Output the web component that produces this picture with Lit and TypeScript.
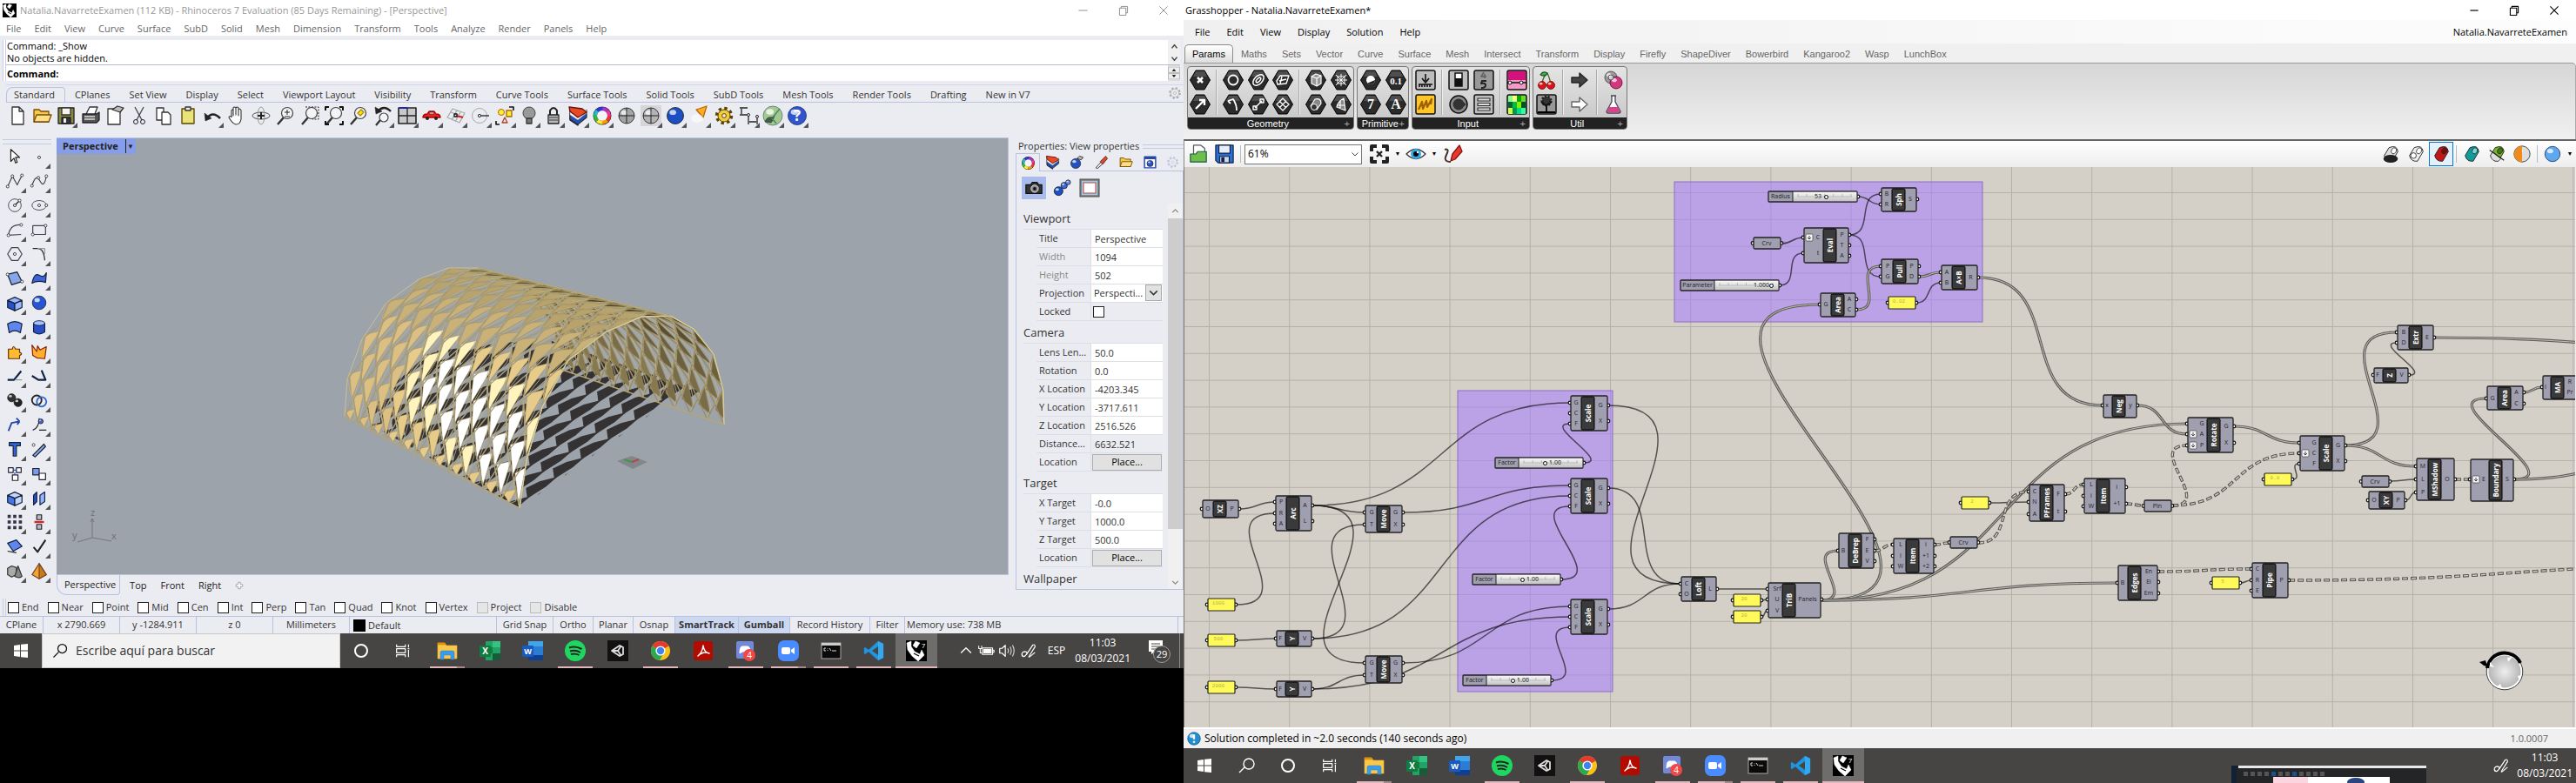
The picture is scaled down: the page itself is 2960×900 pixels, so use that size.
import { LitElement, html, svg, css, nothing } from 'lit';
import { customElement, property } from 'lit/decorators.js';
import { styleMap } from 'lit/directives/style-map.js';

/* ---------- shared ---------- */

const base = css`
  :host { display: block; font-family: 'Open Sans', 'Noto Sans', sans-serif; font-size: 11px; line-height: 16px; color: #222; }
  * { box-sizing: border-box; }
  button { font: inherit; color: inherit; background: none; border: 0; padding: 0; margin: 0; display: inline-flex; align-items: center; justify-content: center; white-space: nowrap; }
  input, select { font: inherit; color: inherit; margin: 0; border-radius: 0; }
  svg { display: block; }
`;

const ic = (body: unknown, size = 24) =>
  html`<svg width=${size} height=${size} viewBox="0 0 24 24" aria-hidden="true">${body}</svg>`;

const ball = (cx: number, cy: number, r: number, fill: string, line = '#111') => svg`
  <circle cx=${cx} cy=${cy} r=${r} fill=${fill} stroke=${line} stroke-width=".8"/>
  <ellipse cx=${cx - r * 0.3} cy=${cy - r * 0.4} rx=${r * 0.4} ry=${r * 0.3} fill="#fff" opacity=".75"/>`;

const path = (d: string, stroke = '#222', fill = 'none', w = 1.3) =>
  svg`<path d=${d} stroke=${stroke} fill=${fill} stroke-width=${w} stroke-linejoin="round"/>`;

const lens = (inner: unknown = nothing) => svg`
  ${path('M10 14L3 22', '#333', 'none', 2.4)}
  <circle cx="14" cy="9" r="6.5" fill="#f4f4f6" stroke="#444" stroke-width="1.2"/>${inner}`;

const wheel = (r = 8) => {
  const colors = ['#e33', '#f90', '#fe2', '#3b3', '#2bc', '#33d', '#a3c', '#e3a'];
  const c = 2 * Math.PI * r;
  return svg`<circle cx="12" cy="12" r=${r + 2.5} fill="#222"/>${colors.map((k, i) => svg`
    <circle cx="12" cy="12" r=${r} fill="none" stroke=${k} stroke-width="4" stroke-dasharray="${c / 8} ${c}" stroke-dashoffset=${-i * c / 8}/>`)}
    <circle cx="12" cy="12" r=${r - 2} fill="#f4f4f8"/>`;
};

const layers = svg`${path('M3 4V17L12 23V14Z', '#113', '#1d50b8')}${path('M3 8L12 14L22 6V14L12 22L3 16Z', '#333', '#1d50b8')}${path('M3 7L12 12L22 5V9L12 17L3 11Z', '#888', '#fff', 0.8)}${path('M2 2L17 4L22 8L12 14L3 7Z', '#611', '#ea4a22')}`;
const folder = svg`${path('M3 5H9L11 7H20V19H3Z', '#7a4c00', '#f7c948')}${path('M6 11H23L20 19H3Z', '#7a4c00', '#ffe08a')}`;
const gear = (c: string, f: string) => svg`
  <circle cx="12" cy="12" r="8.5" fill="none" stroke=${c} stroke-width="3.4" stroke-dasharray="3.4 3.28"/>
  <circle cx="12" cy="12" r="7" fill=${f} stroke=${c} stroke-width="1"/>
  <circle cx="12" cy="12" r="2.4" fill="#eee" stroke=${c}/>`;
const eye = svg`${path('M1 12Q12 1 23 12Q12 23 1 12Z', '#333', '#fff')}<circle cx="12" cy="12" r="6" fill="#36a9e0"/><circle cx="12" cy="12" r="3" fill="#001"/><circle cx="14" cy="10" r="1.2" fill="#fff"/>`;

/* ---------- taskbar ---------- */

const rhinoLogo = svg`<rect width="24" height="24" fill="#000"/>
  ${path('M1 3L6 1L6 7L10 13L16 16L18 11L21 17L14 24L7 18L2 11Z', '#fff', '#fff', 0.5)}${path('M8 6L11 1L16 3L12 9Z', '#fff', '#fff', 0.5)}${path('M9 15L15 18', '#000')}`;

const appIcons: Record<string, unknown> = {
  start: path('M4 6L11 5V11.5H4ZM12 4.8L20 4V11.5H12ZM4 12.5H11V19L4 18ZM12 12.5H20V20L12 19.2Z', '#fff', '#fff', 0),
  search: path('M4 20L10 14M9 10A6 6 0 1 0 21 10A6 6 0 1 0 9 10', '#fff', 'none', 1.4),
  cortana: svg`<circle cx="12" cy="12" r="7" fill="none" stroke="#fff" stroke-width="2"/>`,
  tasks: path('M4 4V7H15V4M4 20V17H15V20M4 9.5H15V14.5H4ZM19 4V8M19 11V20M18 9.5H20', '#fff', 'none', 1.3),
  explorer: svg`${path('M1 3H9L11 6H23V21H1Z', '#f5b92e', '#f9c74a', 0.6)}${path('M1 3H9L10 5H1Z', '#d98b00', '#e59400', 0.5)}${path('M4 22V14Q4 12 6 12H18Q20 12 20 14V22H16V17H8V22Z', '#2f86d0', '#3a9be8', 0.5)}`,
  excel: svg`<rect x="7" y="1" width="17" height="22" rx="1" fill="#21a366"/><path d="M15 1H24V8H15Z" fill="#33c481"/><path d="M15 15H24V23H15Z" fill="#185c37"/><path d="M7 8H15V15H7Z" fill="#107c41"/><rect y="6" width="13" height="13" rx="1" fill="#107c41"/><text x="6.5" y="16" font-size="10" font-weight="700" fill="#fff" text-anchor="middle">X</text>`,
  word: svg`<rect x="7" y="1" width="17" height="22" rx="1" fill="#2b7cd3"/><path d="M7 1H24V7H7Z" fill="#41a5ee"/><path d="M7 17H24V23H7Z" fill="#103f91"/><rect y="6" width="13" height="13" rx="1" fill="#185abd"/><text x="6.5" y="16" font-size="9" font-weight="700" fill="#fff" text-anchor="middle">W</text>`,
  spotify: svg`<circle cx="12" cy="12" r="12" fill="#1ed760"/>${path('M5 8.5Q12 6 19.5 10M6 12.5Q12 10.5 18 14M7 16Q12 14.5 16.5 17', '#222', 'none', 2)}`,
  unity: svg`<rect width="24" height="24" fill="#111"/>${path('M5 12L14 6L18 8V16L14 18ZM5 12H12M12 12L16 6M12 12L16 18', '#ddd', 'none', 1.8)}`,
  chrome: svg`<circle cx="12" cy="12" r="11" fill="#fbc116"/><path d="M12 12L2.5 6.5A11 11 0 0 1 21.5 6.5Z" fill="#e33b2e"/><path d="M12 12L2.5 6.5A11 11 0 0 0 11 23L16 14Z" fill="#2da94f"/><circle cx="12" cy="12" r="5.6" fill="#fff"/><circle cx="12" cy="12" r="4.2" fill="#3f83f0"/>`,
  acrobat: svg`<rect x="1" y="1" width="22" height="22" rx="3" fill="#b30b00"/>${path('M6 18Q11 14 12 6Q13 14 19 15Q12 12 6 18Z', '#fff', 'none', 1.5)}`,
  discord: svg`<rect x="1" y="1" width="20" height="20" rx="2" fill="#7289da"/>${path('M5 15Q5 7 8 7H14Q17 7 17 15L14 13H8Z', '#fff', '#fff', 1)}<circle cx="16" cy="17" r="7" fill="#f04747"/><text x="16" y="21" font-size="10" fill="#fff" text-anchor="middle">4</text>`,
  zoom: svg`<rect width="24" height="24" rx="7" fill="#4a8cff"/><rect x="4" y="8" width="10" height="8" rx="2" fill="#fff"/><path d="M15 11L19 8V16L15 13Z" fill="#fff"/>`,
  cmd: svg`<rect x="1" y="3" width="22" height="18" fill="#0a0a0a" stroke="#aaa"/><path d="M1 3H23V6H1Z" fill="#ccc"/>${path('M6 9H4V12H6M8 9.500V10M8 11V12M10 9L12 12M13 12H18', '#eee', 'none', 0.9)}`,
  code: svg`${path('M17 1L23 4V20L17 23L6 13L2 16L1 15V9L2 8L6 11Z', '#1b80c4', '#2196e0', 0.5)}<path d="M17 7V17L10 12Z" fill="#474543"/><path d="M17 1L23 4V20L17 23Z" fill="#35a8ee"/>`,
  rhino: svg`${rhinoLogo}<text x="20" y="9" font-size="8" fill="#fff" text-anchor="middle">7</text>`,
};
const pinned = ['explorer', 'excel', 'word', 'spotify', 'unity', 'chrome', 'acrobat', 'discord', 'zoom', 'cmd', 'code', 'rhino'];
const running = new Set(['explorer', 'spotify', 'chrome', 'discord', 'zoom', 'cmd', 'code', 'rhino']);
const stacked = new Set(['explorer', 'zoom']);

@customElement('task-bar')
class TaskBar extends LitElement {
  @property({ type: Boolean }) primary = false;
  static styles = [base, css`
    :host { background: #474543; color: #fff; height: 40px; flex: none; }
    .bar { display: flex; height: 100%; position: relative; }
    .sys { width: 48px; }
    .search { display: flex; align-items: center; gap: 8px; flex: 0 1 343px; background: #f2f2f2; border: 1px solid #c8c8c8; padding-left: 10px; }
    .search input { border: 0; background: none; font-size: 14px; color: #222; flex: 1; min-width: 0; padding: 0; outline: 0; }
    .search input::placeholder { color: #333; opacity: 1; }
    .apps { display: flex; margin-left: 3px; gap: 1px; }
    .app { width: 48px; border-bottom: 2px solid transparent; padding-top: 2px; background-clip: padding-box; position: relative; }
    .on::after { content: ''; position: absolute; left: 4px; right: 4px; bottom: -2px; height: 2px; background: #e0b6bb; }
    .stack::after { background: linear-gradient(90deg, #e0b6bb 78%, #a5888b 78%); }
    .active { background: #6f6d6c; background-clip: border-box; }
    .active::after { left: 0; right: 0; }
    .tray { margin-left: auto; display: flex; align-items: center; gap: 3px; }
    .lang { font-size: 12px; padding: 0 8px; }
    .clock { text-align: center; line-height: 18px; font-size: 12px; }
    .note { margin: 0 2px 0 8px; width: 40px; }
    .edge { border-left: 1px solid #888; width: 5px; height: 100%; }
    .gap { width: 1px; }
    .thumb { position: absolute; right: 172px; bottom: 0; width: 224px; height: 20px; }
  `];
  render() {
    const pen = ic(path('M4 19Q2 14 7 13Q12 13 8 18Q5 21 4 17M9 17L17 5Q20 3 20 7L13 18Q11 21 14 19L20 14', '#fff'), 22);
    return html`<div class="bar">
      <button class="sys" aria-label="Inicio">${ic(appIcons.start)}</button>
      ${this.primary
        ? html`<label class="search">${ic(path('M3 21L10 14M9 9A6 6 0 1 0 21 9A6 6 0 1 0 9 9', '#111', 'none', 1.5), 20)}<input placeholder="Escribe aquí para buscar" aria-label="Buscar"></label>`
        : html`<button class="sys" aria-label="Buscar">${ic(appIcons.search)}</button>`}
      <button class="sys" aria-label="Cortana">${ic(appIcons.cortana)}</button>
      <button class="sys" aria-label="Vista de tareas">${ic(appIcons.tasks, 22)}</button>
      <div class="apps">${pinned.map(a => html`
        <button aria-label=${a} class="app ${running.has(a) ? 'on' : ''} ${stacked.has(a) ? 'stack' : ''} ${a === 'rhino' ? 'active' : ''}">${ic(appIcons[a])}</button>`)}
      </div>
      ${this.primary ? nothing : html`
        <svg class="thumb" viewBox="0 0 224 20" aria-hidden="true">
          <rect width="224" height="20" fill="#242527"/><rect width="6" height="20" fill="#123"/><rect x="8" width="216" height="3" fill="#e8e8e8"/>
          ${[0, 1, 2, 3, 4, 5, 6, 7, 8, 9, 10, 11].map(i => svg`<rect x=${14 + i * 8} y="7" width="5" height="5" fill=${i === 4 || i === 7 ? '#1d4f8c' : '#555'}/>`)}
          <rect x="48" y="13" width="134" height="7" fill="#fff"/><rect x="48" y="13" width="40" height="7" fill="#fbd5e0"/><ellipse cx="143" cy="19" rx="10" ry="5" fill="#2b4580"/>
        </svg>`}
      <div class="tray">
        ${this.primary ? html`
          <button aria-label="Mostrar iconos">${ic(path('M5 15L12 8L19 15', '#fff', 'none', 1.6), 20)}</button>
          ${ic(svg`${path('M7 8H21V17H7ZM21 11H23V14H21', '#fff')}${path('M9 10H19V15H9Z', '#fff', '#fff')}${path('M2 5V9H6V5M4 9V15H7', '#fff')}`, 20)}
          ${ic(svg`${path('M3 9H6L10 5V19L6 15H3Z', '#fff')}${path('M13 9Q15 12 13 15M16 7Q19 12 16 17M19 5Q23 12 19 19', '#ccc')}`, 22)}` : nothing}
        ${pen}
        ${this.primary ? html`<span class="lang">ESP</span>` : html`<span class="gap"></span>`}
        <div class="clock"><div>11:03</div><div>08/03/2021</div></div>
        ${this.primary ? html`
          <svg class="note" width="40" height="28" viewBox="0 0 40 28" aria-hidden="true">
            <path d="M10 2H26V15H17L13 18V15H10Z" fill="#fff"/><path d="M13 6H23M13 9H23M13 12H23" stroke="#474543"/>
            <circle cx="25" cy="18" r="9.500" fill="#474543" stroke="#999"/><text x="25" y="22" font-size="11" fill="#fff" text-anchor="middle">29</text>
          </svg><span class="edge"></span>` : html`<span class="gap"></span>`}
      </div>
    </div>`;
  }
}

/* ---------- Rhino ---------- */

const R = {
  page: path('M6 2H14L19 7V22H6ZM14 2V7H19', '#333', '#fff'),
  folder,
  save: svg`${path('M3 3H21V21H3Z', '#222', '#8a8840')}${path('M7 3H17V11H7Z', '#333', '#f5f5ee')}${path('M7 14H17V21H7Z', '#222', '#333')}<path d="M9 15H12V20H9Z" fill="#eee"/>`,
  print: svg`${path('M7 10L11 2H20L17 10', '#333', '#fff')}${path('M3 10H19L22 8V17L19 20H3Z', '#222', '#555')}${path('M5 13H17M5 16H17', '#ddd')}`,
  notes: svg`${path('M4 4H18V22H4Z', '#333', '#fff')}${path('M9 5L15 1L22 3L18 8Z', '#333', '#bbb')}`,
  cut: svg`${path('M7 2L15 17M17 2L9 17', '#444')}<circle cx="8" cy="19" r="2.500" fill="none" stroke="#223"/><circle cx="16" cy="19" r="2.500" fill="none" stroke="#223"/>`,
  copy: svg`${path('M4 3H12V17H4Z', '#333', '#fff')}${path('M10 8H17L20 11V22H10Z', '#333', '#fff')}`,
  paste: svg`${path('M5 4H19V21H5Z', '#554400', '#ece27a')}${path('M9 2H15V6H9Z', '#333', '#eee')}`,
  undo: svg`${path('M6 15Q12 6 21 15', '#222', 'none', 2.6)}${path('M3 9L4 18L11 15Z', '#222', '#222', 0.5)}`,
  hand: path('M6 14V6Q7 4 8 6V12V3Q9 1 11 3V11V3Q12 1 14 3V12V5Q16 3 17 6V16Q16 22 11 22Q7 21 3 14Q4 11 6 14', '#333', '#fff', 1.1),
  rotate: svg`<ellipse cx="12" cy="12" rx="10" ry="4" fill="none" stroke="#555"/><ellipse cx="12" cy="12" rx="4" ry="10" fill="none" stroke="#999"/>${path('M8 12H16M12 8V16', '#222', 'none', 2)}`,
  zoomDyn: lens(path('M11 8H17M14 5V11M11 13H17', '#222', 'none', 1)),
  zoomWin: svg`${lens()}<path d="M7 2H22V16H15" fill="none" stroke="#222" stroke-dasharray="2 1.5"/>`,
  zoomExt: svg`${lens()}${path('M2 6V2H6M18 2H22V6M22 18V22H18M6 22H2V18', '#111', 'none', 2)}`,
  zoomSel: lens(svg`${path('M11 9L15 5L18 8L14 12Z', '#a80', '#ffe400')}`),
  zoomPrev: svg`${path('M9 17L4 23', '#333', 'none', 2.2)}<circle cx="13" cy="14" r="5" fill="#f4f4f6" stroke="#444" stroke-width="1.2"/>${path('M6 7Q13 -1 21 7', '#222', 'none', 2.4)}${path('M3 2L4 10L11 7Z', '#222', '#222', 0.5)}`,
  views: svg`${path('M2 3H22V21H2Z', '#222', '#c9c9c9', 1.6)}${path('M12 3V21M2 12H22', '#222')}${path('M3 3H12', '#22a', 'none', 2)}`,
  car: svg`${path('M2 13Q3 10 7 10L9 7H15L17 10Q22 10 22 14H2Z', '#a00', '#e22')}${path('M10 8H14L15 10H9Z', '#611', '#cde', 0.6)}<circle cx="7" cy="15" r="2" fill="#222"/><circle cx="17" cy="15" r="2" fill="#222"/>`,
  cplane: svg`${path('M8 4L22 9L16 20L2 14ZM6 8L20 13M13 6L7 17M17 8L11 19', '#aaa')}${path('M12 12L20 14', '#d22', 'none', 2)}${path('M10 10H13V13H10Z', '#111', '#fff')}`,
  circle: svg`<circle cx="11" cy="12" r="8.500" fill="none" stroke="#aaa"/><circle cx="11" cy="12" r="1.600" fill="#fff" stroke="#222"/>${path('M13 12H22', '#222')}`,
  shapes: svg`<circle cx="8" cy="8" r="3.500" fill="#fe3" stroke="#a60"/>${path('M14 6H20V13H14Z', '#a60', '#fe3')}${path('M9 20L12 14L15 20Z', '#a42')}${path('M17 2H22V6M2 18V22H6', '#111', 'none', 1.6)}`,
  bulb: svg`<circle cx="12" cy="9" r="7" fill="#999" stroke="#444"/>${path('M9 15H15V21H9Z', '#333', '#777')}`,
  lock: svg`${path('M8 11V6Q12 0 16 6V11', '#222', 'none', 2)}${path('M6 11H18V21H6Z', '#222', '#bbb')}${path('M6 14H18M6 17H18', '#666')}`,
  layers,
  wheel: wheel(),
  wire: svg`${ball(12, 12, 9, '#a4a4a6')}${path('M3 12H21M12 3V21', '#222', 'none', 1)}`,
  wireSel: svg`<rect width="24" height="24" fill="#d6d6da"/>${ball(12, 12, 9, '#b4b4b6')}${path('M3 12H21M12 3V21', '#222', 'none', 1)}`,
  render: ball(12, 12, 9.5, '#1d4fc4'),
  spot: svg`${path('M8 5L20 1L16 14Z', '#b60', '#ffac28')}<ellipse cx="9" cy="15" rx="7" ry="5" fill="#fff" opacity=".6"/>`,
  gear: gear('#5a4400', '#f4c93c'),
  dims: svg`${path('M2 3H8M2 11H12V22M22 11V22M4 4V10M13 19H21M11 3H8', '#222')}<circle cx="12" cy="11" r="1.500" fill="#fff" stroke="#222"/><circle cx="22" cy="13" r="1.500" fill="#fff" stroke="#222"/>`,
  hopper: svg`${ball(12, 12, 11, '#a4c890', '#577')}${path('M3 19Q5 13 11 14L14 12L12 17L10 20Z', '#354', '#465b45', 1)}${path('M12 14L20 4M11 15L16 21', '#486', 'none', 1.4)}`,
  help: svg`${ball(12, 12, 10.5, '#3355cc', '#137')}<text x="12" y="18" font-size="17" font-weight="700" fill="#fff" text-anchor="middle">?</text>`,
};

const node = (x: number, y: number) => svg`<circle cx=${x} cy=${y} r="1.700" fill="#fff" stroke="#222" stroke-width=".9"/>`;
const box3 = (c: string, d: string) => svg`${path('M3 9L12 5L21 9L12 13Z', '#123', c)}${path('M3 9V18L12 22V13Z', '#123', d)}${path('M21 9V18L12 22V13Z', '#123', c)}`;
const palette: unknown[] = [
  path('M7 3V18L11 14L13 20L15 19L13 13H18Z', '#222', '#fff'), node(12, 13),
  svg`${path('M3 19L9 6L15 17L21 5', '#445')}${node(3, 19)}${node(9, 6)}${node(21, 5)}`, svg`${path('M3 18Q8 2 13 12T21 6', '#445')}${node(3, 18)}${node(11, 8)}${node(21, 6)}`,
  svg`<circle cx="12" cy="12" r="8" fill="none" stroke="#445"/>${path('M12 12L18 6', '#222')}${node(12, 12)}${node(18, 6)}`, svg`<ellipse cx="12" cy="12" rx="9" ry="6" fill="none" stroke="#445"/>${node(12, 12)}${node(21, 12)}`,
  svg`${path('M4 19Q6 5 20 6M4 19L20 18', '#445')}${node(4, 19)}${node(20, 6)}`, svg`${path('M4 7H20V18H4Z', '#445')}${node(4, 18)}${node(20, 7)}`,
  svg`${path('M8 4H16L21 12L16 20H8L3 12Z', '#445')}${node(12, 12)}`, svg`${path('M4 5H10Q18 5 19 20', '#222')}${path('M10 5H19V12', '#999')}`,
  svg`${path('M3 7L15 4L21 16L8 20Z', '#123', '#8aa4e8')}${node(3, 7)}${node(21, 16)}`, svg`${path('M3 18Q6 4 12 8T21 5L20 17Q10 14 3 18Z', '#124', '#3c64d8')}`,
  box3('#9ab4ff', '#2a50c8'), ball(12, 12, 8.5, '#2656d4'),
  svg`${path('M3 8Q12 2 21 8L19 19Q12 14 5 19Z', '#124', '#5f86ec')}`, svg`${path('M5 7V18Q12 23 19 18V7Z', '#124', '#2a50c8')}<ellipse cx="12" cy="7" rx="7" ry="3" fill="#a9c0ff" stroke="#124"/>`,
  svg`${path('M4 9H9Q10 3 13 9H18V13Q23 15 18 17V21H4Z', '#630', '#fb3')}`, path('M3 4L9 12L10 5L13 10L21 6L19 21L9 20L4 17Z', '#820', '#ffae2f'),
  svg`${path('M3 17H11L20 6', '#124', 'none', 2.4)}${path('M12 17H21', '#999')}`, svg`${path('M3 12L11 17H20L15 5', '#124', 'none', 2.4)}`,
  svg`${ball(8, 9, 5, '#333')}${ball(16, 15, 5, '#222')}`, svg`<circle cx="9" cy="12" r="6" fill="none" stroke="#222" stroke-width="2"/><circle cx="15" cy="14" r="6" fill="none" stroke="#36c" stroke-width="2"/>`,
  svg`${path('M4 20L8 10L18 8M18 8L14 4M18 8L15 12', '#24a', 'none', 2)}`, svg`${path('M4 19Q12 16 12 4M12 19H21', '#222')}${ball(14, 8, 3, '#46c')}`,
  path('M5 4H19V8H14V21H10V8H5Z', '#123', '#3564d8'), svg`${path('M4 20L18 6L20 9L7 22Z', '#123', '#8fa8e8')}${node(5, 7)}`,
  svg`${path('M4 5H10V11H4ZM14 5H20V11H14ZM9 14H16V21H9Z', '#223', '#fff')}${path('M10 8H14M12 11V14', '#25c')}`, svg`${path('M4 6H12V14H4Z', '#223', '#7a9af0')}${path('M12 12H20V20H12Z', '#223', '#fff')}`,
  box3('#c5d4ff', '#4a74e6'), svg`${path('M5 21V9L9 5V17Z', '#124', '#2a50c8')}${path('M13 21V9L19 5V17Z', '#124', '#9ab4ff')}`,
  svg`${[5, 12, 19].map(x => [5, 12, 19].map(y => svg`<rect x=${x - 2} y=${y - 2} width="4" height="4" fill="#334" />`))}`, svg`${path('M9 3H15V9H9ZM9 15H15V21H9Z', '#223', '#bbb')}${path('M6 12H18', '#d22', 'none', 2.6)}`,
  svg`${path('M3 8L14 4L21 12L10 18Z', '#124', '#5f86ec')}${path('M3 18L14 20', '#222')}`, path('M5 13L10 19L20 4', '#222', 'none', 2.2),
  svg`${path('M3 9L8 6L14 8V17L8 20L3 17Z', '#333', '#aaa')}${path('M16 6L21 19Q17 22 12 19Z', '#333', '#888')}`, svg`${path('M12 3L21 17L12 22L3 17Z', '#743', '#f2a62a')}${path('M12 3V22L21 17Z', '#743', '#c77c10')}`,
];

type Pt = [number, number];
const mix = (a: Pt, b: Pt, t: number): Pt => [a[0] + (b[0] - a[0]) * t, a[1] + (b[1] - a[1]) * t];
const along = (list: Pt[], t: number): Pt => {
  const n = Math.min(Math.max(t, 0), list.length - 1 - 1e-6);
  return mix(list[Math.floor(n)], list[Math.floor(n) + 1], n % 1);
};
/* End arches of the vault in viewport pixels, far end first. */
const farArch: Pt[] = [[331, 320], [334, 277], [351, 231], [378, 190], [416, 162], [450, 149], [485, 149], [525, 165], [555, 195], [573, 232], [578, 265]];
const nearArch: Pt[] = [[532, 425], [540, 370], [558, 309], [588, 255], [632, 222], [672, 205], [705, 204], [732, 219], [755, 248], [766, 289], [767, 329]];
const COLS = 11;
const at = (i: number, j: number): Pt => {
  const t = Math.min(i, COLS) / COLS;
  return mix(along(farArch, j), along(nearArch, j), t * (0.84 + 0.16 * t));
};
const pts = (...p: Pt[]) => p.map(q => `${q[0].toFixed(1)},${q[1].toFixed(1)}`).join(' ');

const panelColor = (i: number, j: number) => {
  if (j >= 5.5) return ['#4b4229', '#5a4f32', '#6b6040', '#796c48', '#867950'][Math.min(4, Math.floor((j - 5.5) * 0.9) + (i < 7 ? 1 : 0))];
  const glare = Math.abs(j - (1.7 - (i - 5) * 0.17));
  if (i > 4.4 && j > 0 && glare < 0.65) return '#ffffff';
  if (i > 3.4 && j > 0 && glare < 1) return '#fff4bd';
  if (j < 3) return i < 3 ? '#dcc083' : '#e6cb8b';
  return j < 4 ? '#c9b178' : '#b8a36c';
};

const vault = () => {
  const half: unknown[] = [], front: unknown[] = [], shade: unknown[] = [];
  const g = (u: number, v: number): Pt => [532 - u * 25.5 + v * 18.2, 425 - u * 13 - v * 13.1];
  for (let u = -0.4; u < 13; u += 0.55)
    for (let v = -1; v < 12; v += 1.7)
      shade.push(svg`<polygon points=${pts(g(u, v), g(u + 0.42, v + 0.5), g(u + 0.3, v + 1.2), g(u, v + 1.9), g(u - 0.06, v + 1.1))}/>`);
  for (let r = 19; r >= 0; r--) {
    const j = r / 2, off = r % 2 ? 0.5 : 0;
    const inner = j >= 5.5;
    const out = inner ? half : front;
    for (let i = 0; i < COLS - off; i++) {
      const x = i + off;
      const l = at(x, j), rt = at(x + 1, j), top = at(x + 0.5, Math.min(j + 0.5, 10)), bot = at(x + 0.5, Math.max(j - 0.5, 0));
      out.push(svg`
        <polygon points=${pts(at(x + 0.02, j + 0.14), at(x + 0.72, Math.min(j + 0.34, 10)), at(x + 0.42, Math.max(j - 0.44, 0)))} fill=${panelColor(x, j)} stroke="#a68d56" stroke-width=".5"/>
        <polygon points=${pts(l, top, rt, bot)} fill="none" stroke=${inner ? '#9b8b5c' : '#a79b74'} stroke-width="1.200"/>
        <polyline points=${pts(l, bot, at(x + 0.76, j + 0.1), top)} fill="none" stroke="#bdb48a" stroke-width=".8"/>`);
    }
  }
  return svg`
    <clipPath id="floor"><polygon points="345,320 532,425 720,290 768,330 769,300 560,230 430,245"/></clipPath>
    <g fill="#353233" clip-path="url(#floor)">${shade}</g>${half}${front}
    <polyline points=${pts(...farArch.slice(0, 7))} fill="none" stroke="#c9c095"/>
    <polyline points=${pts(...nearArch)} fill="none" stroke="#d5cc9f" stroke-width="1.400"/>
    <path d="M331 320L532 425M485 149L705 204M578 265L767 329" stroke="#b5a678" stroke-width="1.400"/>
    <polygon points="644,371 661,365 679,372 662,380" fill="#83878c"/>
    <path d="M652 369L661 372" stroke="#3a9a4a" stroke-width="2"/><path d="M661 372L669 369" stroke="#b04a4a" stroke-width="2"/>`;
};

const field = (label: string, value: string, kind = 'text') => ({ label, value, kind });
const sections = [
  { title: 'Viewport', rows: [field('Title', 'Perspective'), field('Width', '1094', 'dim'), field('Height', '502', 'dim'), field('Projection', 'Perspecti...', 'select'), field('Locked', '', 'check')] },
  { title: 'Camera', rows: [field('Lens Len...', '50.0'), field('Rotation', '0.0'), field('X Location', '-4203.345'), field('Y Location', '-3717.611'), field('Z Location', '2516.526'), field('Distance...', '6632.521', 'read'), field('Location', 'Place...', 'button')] },
  { title: 'Target', rows: [field('X Target', '-0.0'), field('Y Target', '1000.0'), field('Z Target', '500.0'), field('Location', 'Place...', 'button')] },
];

@customElement('rhino-window')
class RhinoWindow extends LitElement {
  static styles = [base, css`
    :host { background: #ebecf1; min-width: 0; overflow: hidden; }
    .title { display: flex; align-items: center; height: 24px; background: #fff; color: #999; padding-left: 3px; gap: 4px; }
    .win { margin-left: auto; display: flex; }
    .win button { width: 46px; height: 24px; }
    .menu { display: flex; gap: 15px; height: 17px; background: #fff; padding-left: 7px; color: #666; }
    .command { margin: 5px 4px 4px 3px; border-left: 4px double #c9cfe2; display: grid; grid-template: 29px 18px / 1fr 14px; background: #fff; color: #000; line-height: 15px; }
    .log { padding-left: 1px; border-bottom: 1px solid #b4bdd4; overflow: hidden; white-space: pre-line; line-height: 14px; }
    .log-scroll { background: #f0f0f0; border-bottom: 1px solid #b4bdd4; display: flex; flex-direction: column; justify-content: space-around; align-items: center; }
    .prompt { display: flex; align-items: center; font-weight: 700; padding-left: 1px; }
    .prompt input { border: 0; flex: 1; outline: 0; min-width: 0; height: 15px; padding: 0 4px; }
    .spin { display: grid; background: #ddd; justify-content: center; align-content: center; }
    .tabs { display: flex; align-items: flex-end; height: 21px; margin-left: 7px; border-top: 1px solid #d3d7e8; border-bottom: 1px solid #b9c3e0; }
    .tabs button { height: 16px; padding: 0 11px; color: #333; }
    .tabs .sel { border: 1px solid #b9c3e0; border-bottom: 0; border-radius: 8px 4px 0 0; height: 17px; padding: 0 11px 0 8px; }
    .cog { margin-left: auto; padding: 0 2px 2px 0; }
    .icons { display: flex; height: 40px; padding: 1px 0 0 6px; }
    .tool { width: 28px; height: 28px; position: relative; }
    .tool::after { content: ''; position: absolute; right: 1px; bottom: 0; border: 3px solid; border-color: transparent #555 #555 transparent; }
    .plain::after { display: none; }
    .work { display: grid; grid-template-columns: 65px 1fr 201px; }
    .palette { display: grid; grid-template-columns: 28px 28px; align-content: start; margin-left: 3px; padding-top: 2px; }
    .palette::before { content: ''; grid-column: 1 / -1; height: 4px; border: solid #c3cbe2; border-width: 1px 0; }
    .view { background: #9da3aa; border: 1px solid #bcc4dc; border-width: 1px 1px 1px 0; position: relative; overflow: hidden; }
    .view > svg { width: 100%; height: 501px; }
    .name { position: absolute; left: 0; top: 0; background: #869dea; font-weight: 700; height: 18px; width: 91px; display: flex; align-items: center; justify-content: space-between; padding: 0 2px 0 7px; color: #222; }
    .name span { border-left: 1px solid #222; padding-left: 1px; font-size: 8px; }
    .views { display: flex; gap: 16px; height: 27px; padding-top: 3px; }
    .views button { height: 18px; }
    .views .sel { border: 1px solid #b9c3e0; border-top: 0; height: 23px; margin-top: -3px; padding: 0 4px 0 8px; border-radius: 0 0 4px 12px; margin-right: -5px; }
    .props { padding: 1px 0 0 8px; }
    .caption { display: flex; align-items: center; gap: 4px; padding: 1px 0 0 3px; color: #333; height: 17px; }
    .caption::after { content: ''; flex: 1; height: 3px; border: solid #c3cbe2; border-width: 1px 0; }
    .ptabs { display: flex; height: 21px; }
    .ptabs button { width: 28px; border-bottom: 1px solid #b9c3e0; }
    .ptabs button:first-child { border: 1px solid #b9c3e0; border-bottom: 0; }
    .ptabs button:last-child { flex: 1; }
    .panel { border: 1px solid #b9c3e0; border-top: 0; height: 481px; display: grid; grid-template-columns: 1fr 17px; overflow: hidden; }
    .pages { display: flex; gap: 4px; padding: 6px 0 0 6px; height: 37px; grid-column: 1 / -1; }
    .pages button { width: 28px; height: 26px; }
    .pages .sel { background: #aabbee; }
    .form { padding: 4px 6px 0 8px; }
    h3 { font-size: 13px; font-weight: 400; margin: 0; height: 26px; line-height: 26px; border-bottom: 1px solid #dcdfe8; color: #333; }
    .row { display: grid; grid-template-columns: 63px 1fr; margin-left: 15px; height: 21px; border-bottom: 1px solid #dcdfe8; align-items: center; color: #333; }
    .row label { padding-left: 3px; white-space: nowrap; border-right: 1px solid #dcdfe8; line-height: 20px; }
    .row.dim label { color: #888; }
    .row input[type='text'] { width: 100%; height: 20px; border: 0; background: #fff; padding: 0 4px; min-width: 0; }
    .row.read input[type='text'] { background: none; }
    .row select { appearance: none; border: 0; width: 100%; height: 20px; padding: 0 3px; background: #fff; }
    .pick { position: relative; }
    .pick svg { position: absolute; right: 1px; top: 0; border: 1px solid #aaa; background: #e1e1e1; pointer-events: none; }
    .row button { border: 1px solid #adadad; background: #e1e1e1; height: 19px; margin: 0 1px; color: #000; }
    input[type='checkbox'] { appearance: none; width: 13px; height: 13px; border: 1px solid #222; background: #fff; }
    .row input[type='checkbox'] { margin-left: 2px; }
    .scroll { background: #f0f0f0; display: flex; flex-direction: column; align-items: center; }
    .thumb { width: 100%; flex: 0 1 357px; background: #cdcdcd; }
    .scroll svg { padding: 2px; }
    .scroll svg:last-child { margin-top: auto; }
    .osnap { display: flex; align-items: center; gap: 10px; height: 20px; margin-left: 3px; border-left: 4px double #c9cfe2; padding-left: 2px; color: #333; }
    .osnap label { display: flex; align-items: center; gap: 3px; }
    .osnap input:disabled { border-color: #bbb; background: #e6e6e6; }
    .status { display: flex; height: 20px; border-top: 1px solid #b9c3e0; color: #333; line-height: 18px; }
    .status > * { border-right: 1px solid #b9c3e0; text-align: center; flex: none; }
    .c50 { width: 50px; } .c88 { width: 88px; } .c169 { width: 169px; } .c65 { width: 65px; } .c46 { width: 46px; } .c48 { width: 48px; } .c73 { width: 73px; } .c59 { width: 59px; } .c92 { width: 92px; } .c40 { width: 40px; }
    .layer { display: flex; align-items: center; gap: 3px; padding-left: 4px; justify-content: flex-start; }
    .layer::before { content: ''; width: 14px; height: 14px; background: #000; }
    .on { background: #ccd7f0; font-weight: 700; }
    .status .mem { flex: 1; text-align: left; padding-left: 2px; margin-right: 6px; }
  `];
  render() {
    const menus = ['File', 'Edit', 'View', 'Curve', 'Surface', 'SubD', 'Solid', 'Mesh', 'Dimension', 'Transform', 'Tools', 'Analyze', 'Render', 'Panels', 'Help'];
    const tabs = ['Standard', 'CPlanes', 'Set View', 'Display', 'Select', 'Viewport Layout', 'Visibility', 'Transform', 'Curve Tools', 'Surface Tools', 'Solid Tools', 'SubD Tools', 'Mesh Tools', 'Render Tools', 'Drafting', 'New in V7'];
    const flyouts = new Set(['save', 'undo', 'zoomPrev', 'views', 'car', 'cplane', 'circle', 'shapes', 'bulb', 'lock', 'layers', 'wheel', 'wireSel', 'render', 'spot', 'gear', 'dims', 'hopper', 'help']);
    const snaps = ['End', 'Near', 'Point', 'Mid', 'Cen', 'Int', 'Perp', 'Tan', 'Quad', 'Knot', 'Vertex', 'Project', 'Disable'];
    const status: [string, string][] = [['CPlane', 'c50'], ['x 2790.669', 'c88'], ['y -1284.911', 'c88'], ['z 0', 'c88'], ['Millimeters', 'c88'], ['Default', 'c169 layer'], ['Grid Snap', 'c65'], ['Ortho', 'c46'], ['Planar', 'c46'], ['Osnap', 'c48'], ['SmartTrack', 'c73 on'], ['Gumball', 'c59 on'], ['Record History', 'c92'], ['Filter', 'c40'], ['Memory use: 738 MB', 'mem']];
    return html`
      <header class="title">${ic(rhinoLogo, 16)}<span>Natalia.NavarreteExamen (112 KB) - Rhinoceros 7 Evaluation (85 Days Remaining) - [Perspective]</span>
        <div class="win">
          <button aria-label="Minimize">${ic(path('M6 12H17', '#888', 'none', 1), 22)}</button>
          <button aria-label="Restore">${ic(path('M7 9H15V18H7ZM9 9V7H17V15H15', '#888', 'none', 1), 22)}</button>
          <button aria-label="Close">${ic(path('M7 7L17 17M17 7L7 17', '#888', 'none', 1), 22)}</button>
        </div>
      </header>
      <nav class="menu">${menus.map(m => html`<button>${m}</button>`)}</nav>
      <section class="command">
        <div class="log">Command: _Show
No objects are hidden.</div>
        <div class="log-scroll">${ic(path('M4 17L12 7L20 17', '#444', 'none', 4), 9)}${ic(path('M4 7L12 17L20 7', '#444', 'none', 4), 9)}</div>
        <label class="prompt">Command:<input type="text"></label>
        <div class="spin">${ic(svg`<path d="M1 0H23V11H1ZM1 13H23V24H1Z" fill="#eee" stroke="#999"/><path d="M8 8L12 4L16 8ZM8 16L12 20L16 16Z"/>`, 14)}</div>
      </section>
      <nav class="tabs">${tabs.map((t, i) => html`<button class=${i ? '' : 'sel'}>${t}</button>`)}
        <span class="cog">${ic(gear('#aaa', '#ebecf1'), 16)}</span></nav>
      <div class="icons">${Object.entries(R).map(([k, v]) => html`<button aria-label=${k} class="tool ${flyouts.has(k) ? '' : 'plain'}">${ic(v)}</button>`)}</div>
      <div class="work">
        <div class="palette">${palette.map((p, i) => html`<button aria-label="Tool ${i + 1}" class="tool ${i ? '' : 'plain'}">${ic(p, 22)}</button>`)}</div>
        <div>
          <div class="view">
            <svg role="img" aria-label="Vault model">${vault()}
              <g fill="none" stroke="#73777d"><path d="M41 459V437M41 459L63 463M41 459L24 464M39 441L41 437L43 441"/></g>
              <g fill="#6c7076" font-size="11"><text x="39" y="434">z</text><text x="63" y="461">x</text><text x="18" y="460">y</text></g>
            </svg>
            <button class="name">Perspective<span>▼</span></button>
          </div>
          <nav class="views"><button class="sel">Perspective</button><button>Top</button><button>Front</button><button>Right</button>
            <button aria-label="New viewport">${ic(path('M9 3H15V9H21V15H15V21H9V15H3V9H9Z', '#999', '#fff', 2), 10)}</button></nav>
        </div>
        <aside class="props">
          <div class="caption">Properties: View properties</div>
          <div class="ptabs">
            <button aria-label="Properties">${ic(wheel(), 17)}</button>
            <button aria-label="Layers">${ic(layers, 17)}</button>
            <button aria-label="Rendering">${ic(svg`${ball(10, 14, 8, '#2450c0')}${path('M12 6L16 2L22 4L19 8Z', '#333', '#bbb')}`, 17)}</button>
            <button aria-label="Materials">${ic(svg`${path('M3 21L14 9L17 12L6 22Z', '#333', '#eee')}${path('M10 11L19 2L22 6L14 15Z', '#633', '#d64a2a')}`, 17)}</button>
            <button aria-label="Libraries">${ic(folder, 17)}</button>
            <button aria-label="Help">${ic(svg`${path('M3 3H21V21H3Z', '#24a', '#fff', 2)}${path('M3 5H21', '#24a', 'none', 4)}${ball(12, 14, 5, '#2b52cc')}`, 17)}</button>
            <button aria-label="Options">${ic(gear('#bcc4da', '#ebecf1'), 15)}</button>
          </div>
          <div class="panel">
            <div class="pages">
              <button class="sel" aria-label="Camera">${ic(svg`${path('M2 8H8L10 5H16L18 8H22V19H2Z', '#111', '#333')}<circle cx="13" cy="13" r="4.500" fill="#888" stroke="#eee"/><circle cx="13" cy="13" r="2" fill="#111"/>`, 22)}</button>
              <button aria-label="Material">${ic(svg`${ball(8, 16, 5.5, '#1d4fc4')}${ball(15, 9, 4, '#3c68d8')}${ball(20, 5, 3, '#6c8ee8')}`, 22)}</button>
              <button aria-label="Frame">${ic(svg`<rect x="1" y="2" width="22" height="20" fill="#888" stroke="#444"/><rect x="3" y="4" width="18" height="16" fill="#8fd4f0"/><rect x="5" y="6" width="14" height="12" fill="#fff" stroke="#d33"/>`)}</button>
            </div>
            <div class="form">${sections.map((s, si) => html`<h3>${s.title}</h3>${s.rows.map((r, ri) => {
              const id = `f${si}-${ri}`;
              return html`<div class="row ${r.kind}"><label for=${id}>${r.label}</label>${
                r.kind === 'select' ? html`<div class="pick"><select id=${id}><option>${r.value}</option></select>${ic(path('M6 9L12 15L18 9', '#333', 'none', 2), 19)}</div>`
                : r.kind === 'check' ? html`<input id=${id} type="checkbox">`
                : r.kind === 'button' ? html`<button id=${id}>${r.value}</button>`
                : html`<input id=${id} type="text" .value=${r.value} ?readonly=${r.kind === 'read'}>`}</div>`;
            })}`)}<h3>Wallpaper</h3></div>
            <div class="scroll">${ic(path('M6 15L12 9L18 15', '#888', 'none', 2.4), 17)}<div class="thumb"></div>${ic(path('M6 9L12 15L18 9', '#888', 'none', 2.4), 17)}</div>
          </div>
        </aside>
      </div>
      <div class="osnap">${snaps.map((s, i) => html`<label><input type="checkbox" ?disabled=${i > 10}>${s}</label>`)}</div>
      <footer class="status">${status.map(([t, c]) => html`<span class=${c}>${t}</span>`)}</footer>
      <task-bar primary></task-bar>`;
  }
}

/* ---------- Grasshopper ---------- */

const hex = (inner: unknown) => svg`${path('M7 1H17L23.500 12L17 23H7L.5 12Z', '#000', '#2b2b2b', 1)}<path d="M7 2H17L20 8H4Z" fill="#666" opacity=".6"/>${inner}`;
const tile = (inner: unknown, fill = '#bdbdbd') => svg`<rect x="1" y="1" width="22" height="22" rx="2" fill=${fill} stroke="#111" stroke-width="1.500"/>${inner}`;
const white = (d: string, w = 1.8, f = 'none') => path(d, '#fff', f, w);
const glyph = (t: string, size = 14) => svg`<text x="12" y="17" text-anchor="middle" font-family="Liberation Serif, serif" font-size=${size} font-weight="700" fill="#fff">${t}</text>`;
const arrow = (c: string, f: string) => path('M3 9H12V4L21 12L12 20V15H3Z', c, f, 1.4);

const ribbon = [
  { name: 'Geometry', width: 192, cols: [
    [hex(white('M9 9L15 15M15 9L9 15', 2.6)), hex(white('M7 17L16 8M11 7H17V13', 2.4))],
    null,
    [hex(svg`<circle cx="12" cy="12" r="5.500" fill="none" stroke="#fff" stroke-width="1.800"/>`), hex(white('M6 8L12 6Q16 12 16 19M6 8L9 11'))],
    [hex(svg`<g transform="rotate(-45 12 12)" fill="none" stroke="#fff" stroke-width="1.500"><ellipse cx="12" cy="12" rx="7.500" ry="4.500"/><ellipse cx="12" cy="12" rx="3.500" ry="1.700"/></g>`), hex(white('M8 16L16 8M6 14H10V18H6ZM14 6H18V10H14Z', 1.4))],
    [hex(white('M5 13L9 7L19 7L16 16L6 17ZM11 8L9 16M16 11L8 13', 1.4)), hex(white('M12 5L19 12L12 19L5 12ZM8 8L16 16M16 8L8 16', 1.3))],
    null,
    [hex(svg`${white('M7 8L12 5L18 7V16L13 19L7 16Z', 1.2, '#999')}${white('M7 8L13 10V19M13 10L18 7', 1.2)}`), hex(svg`${white('M6 14L11 6Q18 4 18 11L13 18Z', 1.2, '#888')}<circle cx="10" cy="15" r="3.500" fill="#333" stroke="#fff"/>`)],
    [hex(white('M6 6L18 18M18 6L6 18M12 5V19M5 12H19M8 8H16V16H8Z', 1)), hex(white('M15 5Q8 9 7 15L17 19ZM11 8V17M8 13L16 13', 1.2, '#888'))],
  ] },
  { name: 'Primitive', width: 60, cols: [
    [hex(svg`<circle cx="12" cy="12" r="5" fill="#fff"/><path d="M8.500 15.500A5 5 0 0 0 17 12Z" fill="#222"/>`), hex(glyph('7', 16))],
    [hex(glyph('0.1', 11)), hex(glyph('A', 16))],
  ] },
  { name: 'Input', width: 136, cols: [
    [tile(path('M12 5V13M8 10L12 15L16 10M4 17H20M5 17V20M8 17V20M11 17V20M14 17V20M17 17V20', '#111', 'none', 1.6)), tile(path('M4 18L8 9L9 17L13 8L14 15L19 6L18 12', '#a06000', 'none', 2.2), '#fec62a')],
    null,
    [tile(svg`<rect x="8" y="4" width="8" height="15" fill="#fff" stroke="#111" stroke-width="1.500"/><rect x="8" y="10" width="8" height="9" fill="#111"/>`), svg`<circle cx="12" cy="12" r="10" fill="#8a8a8a" stroke="#111" stroke-width="1.500"/><circle cx="12" cy="12" r="6.500" fill="#333"/><path d="M16 8L21 12L16 16Z" fill="#333"/>`],
    [tile(svg`${path('M12 3L9 8H15M13 5V10', '#666', 'none', 1.8)}${path('M15 13H10L9 16Q14 15 14 18Q14 21 9 21', '#222', 'none', 2)}`, '#999'), tile(path('M5 5H19V8H5ZM5 10.500H19V13.500H5ZM5 16H19V19H5Z', '#333', '#ddd', 1.2))],
    null,
    [tile(svg`<rect x="2" y="2" width="20" height="10" fill="#d4127e"/>${path('M1 15H23', '#111')}<circle cx="4" cy="15" r="2" fill="#fff" stroke="#111"/><circle cx="17" cy="15" r="2" fill="#fff" stroke="#111"/>`, '#f59ac6'),
      tile(svg`${['#8f8', '#ff8', '#0a0', '#6d2', '#063', '#0b4', '#8e0', '#052', '#cf4', '#094', '#0d8', '#3f9'].map((c, i) => svg`<rect x=${2 + (i % 4) * 5} y=${2 + Math.floor(i / 4) * 7} width="5" height="7" fill=${c}/>`)}`)],
  ] },
  { name: 'Util', width: 109, cols: [
    [svg`${path('M7 16Q8 8 13 4M17 16Q15 8 13 4', '#462')}${path('M13 4Q8 1 5 6Q11 9 13 4Z', '#253', '#4a4')}${ball(7, 18, 4.5, '#d8141c', '#700')}${ball(17, 18, 4.5, '#d8141c', '#700')}`,
      tile(svg`<circle cx="12" cy="8" r="5" fill="#333" stroke="#222" stroke-width="3" stroke-dasharray="2 1.500"/>${path('M12 12V21M12 14L6 9M12 13L18 9', '#111', 'none', 2)}<rect x="2" y="20" width="20" height="2"/>`, '#999')],
    null,
    [arrow('#222', '#444'), arrow('#666', '#fff')],
    null,
    [svg`${ball(9, 9, 7, '#999', '#444')}${ball(15, 15, 7, '#d3387f', '#502')}${ball(9, 9, 3, '#ccc', '#444')}`, svg`${path('M9 2H15M10 2V9L4 20Q4 22 6 22H18Q20 22 20 20L14 9V2', '#445', '#fff')}<path d="M7 15H17L19.500 21H4.500Z" fill="#e0408a"/>`],
  ] },
];

type Port = [string, number];
interface GNode { x: number; y: number; w: number; h: number; name: string; bar: number; ins: Port[]; outs: Port[]; tags?: number[]; }
const n = (name: string, x: number, y: number, w: number, h: number, bar: number, ins: Port[], outs: Port[], tags?: number[]): GNode => ({ name, x, y, w, h, bar, ins, outs, tags });

const nodes: GNode[] = [
  n('XZ', 1382, 575, 41, 20, 1394, [['O', 585]], [['P', 585]]),
  n('Arc', 1466, 570, 41, 40, 1478, [['P', 577], ['R', 590], ['A', 602]], [['A', 581], ['L', 599]]),
  n('Move', 1569, 581, 42, 31, 1582, [['G', 589], ['T', 603]], [['G', 589], ['X', 603]]),
  n('Move', 1569, 754, 42, 31, 1582, [['G', 762], ['T', 776]], [['G', 762], ['X', 776]]),
  ...[455, 550, 689].map(y => n('Scale', 1805, y, 42, 40, 1817, [['G', y + 8], ['C', y + 20], ['F', y + 32]], [['G', y + 11], ['X', y + 29]])),
  n('Y', 1467, 725, 40, 18, 1477, [['F', 734]], [['V', 734]]),
  n('Y', 1467, 783, 40, 18, 1477, [['F', 792]], [['V', 792]]),
  n('Loft', 1932, 663, 40, 28, 1944, [['C', 671], ['O', 683]], [['L', 677]]),
  n('TriB', 2032, 670, 60, 40, 2048, [['Srf', 677], ['U', 689], ['V', 702]], [['Panels', 689]]),
  n('DeBrep', 2113, 613, 40, 40, 2124, [['B', 633]], [['F', 620], ['E', 633], ['V', 645]]),
  n('Item', 2176, 619, 46, 40, 2190, [['L', 626], ['i', 639], ['W', 651]], [['i', 626], ['+1', 639], ['+2', 651]]),
  n('PFrames', 2332, 557, 40, 42, 2344, [['C', 565], ['N', 577], ['A', 591]], [['F', 568], ['t', 588]]),
  n('Item', 2395, 550, 47, 40, 2409, [['L', 557], ['i', 570], ['W', 582]], [['i', 560], ['+1', 579]]),
  n('Neg', 2417, 454, 38, 26, 2427, [['x', 466]], [['y', 466]]),
  n('Edges', 2434, 650, 45, 40, 2445, [['B', 670]], [['En', 657], ['Ei', 669], ['Em', 682]]),
  n('Area', 2092, 337, 40, 27, 2104, [['G', 350]], [['A', 344], ['C', 356]]),
  n('Eval', 2073, 262, 51, 40, 2095, [['C', 273], ['t', 291]], [['P', 270], ['T', 282], ['A', 294]], [273]),
  n('Sph', 2162, 216, 40, 27, 2174, [['B', 223], ['R', 235]], [['S', 229]]),
  n('Pull', 2162, 298, 42, 28, 2175, [['P', 306], ['G', 318]], [['P', 306], ['D', 318]]),
  n('A×B', 2231, 305, 41, 28, 2243, [['A', 313], ['B', 325]], [['R', 319]]),
  n('Rotate', 2514, 480, 52, 40, 2536, [['G', 487], ['A', 499], ['P', 512]], [['G', 490], ['X', 509]], [499, 512]),
  n('Scale', 2643, 501, 51, 40, 2665, [['G', 509], ['C', 521], ['F', 533]], [['G', 512], ['X', 530]], [521]),
  n('Extr', 2755, 374, 41, 28, 2768, [['B', 382], ['D', 394]], [['E', 388]]),
  n('Z', 2728, 423, 39, 17, 2738, [['F', 431]], [['V', 431]]),
  n('XY', 2722, 565, 41, 20, 2734, [['O', 575]], [['P', 575]]),
  n('MShadow', 2777, 527, 43, 48, 2790, [['M', 536], ['L', 551], ['P', 566]], [['O', 551]]),
  n('Boundary', 2839, 528, 49, 48, 2860, [['E', 551]], [['S', 551]], [551]),
  n('Area', 2858, 444, 41, 27, 2870, [['G', 458]], [['A', 451], ['C', 464]]),
  n('MA', 2922, 432, 39, 27, 2931, [['I', 445]], [['R', 439], ['Pr', 451]]),
  n('Pipe', 2588, 647, 41, 40, 2600, [['C', 654], ['R', 667], ['E', 679]], [['P', 667]]),
];
const chips: [string, number, number][] = [['Crv', 2015, 273], ['Crv', 2241, 617], ['Pln', 2464, 575], ['Crv', 2714, 547]];
const notes: [string, number, number][] = [['1000', 1388, 688], ['500', 1388, 729], ['2000', 1388, 783], ['20', 1992, 683], ['20', 1992, 702], ['2', 2254, 571], ['0.02', 2170, 341], ['0.8', 2602, 544], ['5', 2542, 663]];
const sliders = [
  { label: 'Factor', x: 1718, y: 526, w: 101, cap: 27, pos: 41, value: '1.00', tx: 69 },
  { label: 'Factor', x: 1692, y: 660, w: 101, cap: 27, pos: 41, value: '1.00', tx: 69 },
  { label: 'Factor', x: 1681, y: 776, w: 101, cap: 27, pos: 41, value: '1.00', tx: 69 },
  { label: 'Radius', x: 2032, y: 220, w: 102, cap: 28, pos: 52, value: '53', tx: 57 },
  { label: 'Parameter', x: 1931, y: 322, w: 113, cap: 39, pos: 92, value: '1.000', tx: 93 },
];
type Wire = [number, number, number, number];
const single: Wire[] = [
  [1424, 585, 1465, 577], [1421, 695, 1465, 590], [1508, 581, 1568, 589], [1508, 581, 1568, 762], [1508, 581, 1804, 463],
  [1421, 736, 1466, 734], [1508, 734, 1568, 603], [1508, 734, 1804, 570], [1421, 790, 1466, 792], [1508, 792, 1568, 776], [1508, 792, 1804, 709],
  [1612, 589, 1804, 558], [1612, 762, 1804, 697], [1820, 532, 1804, 487], [1794, 666, 1804, 582], [1783, 782, 1804, 721],
  [1848, 466, 1931, 671], [1848, 561, 1931, 671], [1848, 700, 1931, 671], [1973, 677, 2031, 677], [2024, 690, 2031, 689], [2024, 709, 2031, 702],
  [2135, 226, 2161, 235], [2125, 270, 2161, 223], [2125, 270, 2161, 318], [2047, 280, 2072, 273], [2045, 328, 2072, 291], [2202, 348, 2230, 325],
  [2286, 578, 2331, 577], [2634, 551, 2642, 533], [2768, 431, 2754, 394], [2746, 553, 2776, 551], [2764, 575, 2776, 566], [2574, 670, 2587, 667],
];
const double: Wire[] = [
  [2205, 318, 2230, 313], [2273, 319, 2416, 466], [2133, 356, 2161, 306], [2093, 690, 2091, 350], [2093, 690, 2112, 633], [2093, 690, 2513, 487], [2093, 690, 2433, 670],
  [2456, 466, 2513, 499], [2567, 490, 2642, 509], [2695, 512, 2754, 382], [2695, 512, 2776, 536], [2797, 388, 3140, 400], [2889, 551, 2857, 458], [2889, 551, 3040, 536], [2900, 451, 2921, 445],
];
const tree: Wire[] = [
  [2154, 633, 2175, 626], [2223, 626, 2240, 624], [2273, 624, 2331, 565], [2373, 568, 2394, 557], [2443, 579, 2463, 581], [2496, 581, 2513, 512], [2496, 581, 2642, 521],
  [2821, 551, 2838, 551], [2480, 657, 2587, 654], [2630, 667, 3140, 650],
];
const curve = ([x0, y0, x1, y1]: Wire) => {
  const d = Math.hypot(x1 - x0, y1 - y0), r = (x1 - x0) / d;
  const c = d * Math.min(0.7, Math.max(0.5, 1.1 - r));
  return `M${x0} ${y0}C${x0 + c} ${y0} ${x1 - c} ${y1} ${x1} ${y1}`;
};
const port = (x: number, y: number) => svg`<circle cx=${x} cy=${y} r="1.800" fill="#fff" stroke="#111" stroke-width="1.200"/>`;

const drawNode = (g: GNode) => svg`
  ${g.ins.map(p => port(g.x - 1, p[1]))}${g.outs.map(p => port(g.x + g.w + 1, p[1]))}
  <rect class="body" x=${g.x} y=${g.y} width=${g.w} height=${g.h} rx="1.500"/>
  <rect class="bar" x=${g.bar} y=${g.y + 1} width="15" height=${g.h - 2} rx="1.500"/>
  <text class="name" transform="translate(${g.bar + 11} ${g.y + g.h / 2}) rotate(-90)">${g.name}</text>
  ${g.ins.map(p => svg`<text class="port" x=${g.bar - 6} y=${p[1] + 2}>${p[0]}</text>`)}
  ${g.outs.map(p => svg`<text class="port" x=${(g.bar + 14 + g.x + g.w) / 2} y=${p[1] + 2}>${p[0]}</text>`)}
  ${(g.tags ?? []).map(y => svg`<rect x=${g.x + 2} y=${y - 4} width="8" height="8" rx="1" fill="#f4f4f4" stroke="#444" stroke-width=".7"/><path d="M${g.x + 6} ${y - 2}V${y + 2}M${g.x + 4} ${y}L${g.x + 6} ${y + 2}L${g.x + 8} ${y}" stroke="#222" fill="none" stroke-width=".8"/>`)}`;

@customElement('grasshopper-window')
class GrasshopperWindow extends LitElement {
  static styles = [base, css`
    :host { display: flex; flex-direction: column; min-width: 0; background: #f0f0f0; overflow: hidden; color: #000; }
    .title { display: flex; height: 23px; align-items: center; background: #fff; padding-left: 2px; }
    .win { margin-left: auto; display: flex; padding-right: 2px; }
    .win button { width: 46px; height: 22px; }
    .menu { display: flex; gap: 19px; height: 27px; align-items: center; padding: 0 10px 0 13px; background: linear-gradient(90deg, #f0f0f0, #fdfdfd); }
    .doc { margin-left: auto; }
    .tabs { display: flex; height: 22px; align-items: stretch; font: 11px/16px 'Liberation Sans', Arial, sans-serif; color: #666; padding-left: 1px; }
    .tabs button { padding: 2px 9px 0 8px; }
    .tabs .sel { background: linear-gradient(#fff, #ddd); border: 1px solid #8a8a8a; border-bottom: 0; border-radius: 5px 5px 0 0; color: #000; padding: 0 8px; margin: 1px 1px 0 0; }
    .ribbon { height: 88px; border-top: 1px solid #9a9a9a; border-right: 1px solid #aaa; border-radius: 0 5px 0 0; background: linear-gradient(#d6d6d6, #f0f0f0); display: flex; gap: 3px; padding: 3px 4px; align-items: flex-start; }
    .group { border: 1px solid #777; border-radius: 4px; height: 73px; background: linear-gradient(#e4e4e4, #c4c4c4); display: flex; flex-direction: column; overflow: hidden; }
    .cols { flex: 1; display: flex; justify-content: space-around; padding: 1px 0; }
    .col { display: grid; }
    .col button { width: 28px; height: 28px; }
    .sep { width: 1px; background: #aaa; margin: 2px 3px; border-right: 1px solid #eee; box-sizing: content-box; }
    .foot { background: #222; color: #fff; height: 14px; display: flex; font: 11px/14px 'Liberation Sans', Arial, sans-serif; padding: 0 4px; }
    .foot span:first-child { flex: 1; text-align: center; }
    .foot span:last-child { color: #aaa; }
    .tools { height: 32px; border-top: 2px solid #666; border-left: 1px solid #888; background: linear-gradient(#fff, #ededed); display: flex; align-items: center; padding: 0 2px; gap: 2px; }
    .tools button { width: 28px; height: 28px; }
    .tools .drop { width: 10px; font-size: 7px; }
    .line { width: 1px; height: 20px; background: #bbb; margin: 0 2px; }
    .zoom { position: relative; width: 135px; height: 23px; margin-right: 4px; }
    .zoom select { appearance: none; width: 100%; height: 100%; background: #fff; border: 1px solid #777; padding: 0 3px; font-size: 12px; }
    .zoom svg { position: absolute; right: 2px; top: 5px; pointer-events: none; }
    .right { margin-left: auto; display: flex; align-items: center; gap: 1px; }
    .right .sel { border: 1px solid #0078d7; background: #e4f1fb; }
    .canvas { flex: 1 0 644px; background: #d4d0c8; position: relative; overflow: hidden; border-left: 1px solid #777; border-right: 1px solid #eee; }
    .canvas > svg { position: absolute; inset: 0; width: 100%; height: 100%; }
    .group-box { fill: #a67cff; fill-opacity: .55; stroke: #8c6fc0; }
    .body { fill: #a09fb0; stroke: #222; stroke-width: 1.3; }
    .bar { fill: #3a3a3a; stroke: #000; }
    .name { fill: #fff; font: 700 8px 'Open Sans', sans-serif; text-anchor: middle; }
    .port { fill: #222; font: 7px 'Open Sans', sans-serif; text-anchor: middle; }
    .note { fill: #b9b446; font: 6px 'Liberation Mono', monospace; text-anchor: middle; }
    .thin { fill: none; stroke: #000; stroke-opacity: .6; stroke-width: 1.5; }
    .thick { fill: none; stroke: #5f5d59; stroke-width: 3.2; }
    .core { fill: none; stroke: #c4c1ba; stroke-width: 1; }
    .tree { fill: none; stroke: #55534f; stroke-width: 3.4; stroke-dasharray: 7 3; }
    .tree-core { fill: none; stroke: #d4d0c8; stroke-width: 1.4; stroke-dasharray: 5 5; stroke-dashoffset: -1; }
    .slide { appearance: none; display: block; width: 100%; height: 12px; background: none; margin: 0; }
    .slide::-webkit-slider-thumb { appearance: none; width: 5px; height: 5px; border-radius: 50%; border: 1px solid #000; background: #fff; }
    .status { height: 24px; flex: none; border-top: 2px solid #fff; display: flex; align-items: center; gap: 4px; padding: 0 32px 0 4px; font-size: 12px; }
    .status span:last-child { margin-left: auto; color: #666; font-size: 11px; }
  `];
  render() {
    const tabs = ['Params', 'Maths', 'Sets', 'Vector', 'Curve', 'Surface', 'Mesh', 'Intersect', 'Transform', 'Display', 'Firefly', 'ShapeDiver', 'Bowerbird', 'Kangaroo2', 'Wasp', 'LunchBox'];
    const gem = (a: string, b: string) => svg`${path('M4 14L10 4Q20 0 21 9L14 21Q6 22 4 14Z', '#222', a, 1)}<ellipse cx="16" cy="8" rx="3" ry="4" fill=${b} stroke="#222" stroke-width=".8" transform="rotate(30 16 8)"/>`;
    return html`
      <header class="title"><span>Grasshopper - Natalia.NavarreteExamen*</span><div class="win">
        <button aria-label="Minimize">${ic(path('M7 12H17', '#000', 'none', 1.3), 22)}</button>
        <button aria-label="Restore">${ic(path('M7 9H15V18H7ZM9 9V7H17V15H15', '#000', 'none', 1.2), 22)}</button>
        <button aria-label="Close">${ic(path('M7 7L17 17M17 7L7 17', '#000', 'none', 1.2), 22)}</button></div></header>
      <nav class="menu">${['File', 'Edit', 'View', 'Display', 'Solution', 'Help'].map(m => html`<button>${m}</button>`)}<button class="doc">Natalia.NavarreteExamen</button></nav>
      <nav class="tabs">${tabs.map((t, i) => html`<button class=${i ? '' : 'sel'}>${t}</button>`)}</nav>
      <div class="ribbon">${ribbon.map(g => html`
        <section class="group" style=${styleMap({ width: `${g.width}px` })}>
          <div class="cols">${g.cols.map(c => c
            ? html`<div class="col">${c.map((b, i) => html`<button aria-label="${g.name} ${i + 1}">${ic(b)}</button>`)}</div>`
            : html`<span class="sep"></span>`)}</div>
          <div class="foot"><span>${g.name}</span><span>+</span></div>
        </section>`)}</div>
      <div class="tools">
        <button aria-label="Open">${ic(svg`${path('M6 1H15L20 5V14H6Z', '#555', '#fff')}${path('M2 12H9L11 9H22V22H2Z', '#254', '#6cc04a')}`, 22)}</button>
        <button aria-label="Save">${ic(svg`${path('M1 1H23V23H4L1 20Z', '#124', '#2b6fd6')}${path('M5 1H19V11H5Z', '#124', '#e8eef8')}${path('M6 15H18V23H6Z', '#124', '#cdd7ea')}<path d="M8 16H12V22H8Z" fill="#124"/>`, 22)}</button>
        <span class="line"></span>
        <div class="zoom"><select aria-label="Zoom"><option>61%</option></select>${ic(path('M5 9L12 16L19 9', '#444', 'none', 2), 12)}</div>
        <button aria-label="Zoom extents">${ic(svg`${path('M3 9V3H9M15 3H21V9M21 15V21H15M9 21H3V15', '#222', 'none', 4)}${path('M9 9L15 15M15 9L9 15', '#222', 'none', 2.4)}`)}</button><button class="drop" aria-label="Zoom list">▼</button>
        <button aria-label="Preview">${ic(eye)}</button><button class="drop" aria-label="Preview list">▼</button>
        <button aria-label="Sketch">${ic(svg`${path('M3 7Q9 5 5 13Q1 21 10 21', '#433', 'none', 2)}${path('M10 20L12 12L20 2L23 9L15 18Z', '#811', '#e83a2c')}`)}</button>
        <div class="right">
          <button aria-label="No preview">${ic(svg`${gem('#ddd', '#fff')}<ellipse cx="12" cy="18" rx="9" ry="5" fill="#222"/>`, 22)}</button>
          <button aria-label="Wire preview">${ic(svg`${gem('#eee', '#fff')}<circle cx="9" cy="14" r="3.500" fill="#fff" stroke="#333"/>`, 22)}</button>
          <button class="sel" aria-label="Shaded preview">${ic(gem('#c01818', '#7a0c0c'), 22)}</button>
          <span class="line"></span>
          <button aria-label="Selected">${ic(gem('#129a9a', '#7adada'), 22)}</button>
          <button aria-label="Document">${ic(svg`${gem('#7ab52a', '#3f7a10')}${path('M4 14L7 9L17 18L14 21Q6 22 4 14Z', '#555', '#ddd', 1)}${path('M3 7L21 20', '#222')}`, 22)}</button>
          <button aria-label="Mesh quality">${ic(svg`${ball(12, 12, 10, '#ddd')}<path d="M12 2A10 10 0 0 0 12 22Z" fill="#ef8a1c"/>`, 22)}</button>
          <span class="line"></span>
          <button aria-label="Display">${ic(ball(12, 12, 9.5, '#5fa8ef', '#125'), 22)}</button><button class="drop" aria-label="Display list">▼</button>
        </div>
      </div>
      <main class="canvas">
        <svg>
          <defs>
            <pattern id="grid" width="92.200" height="30.800" patternUnits="userSpaceOnUse" x="28" y="29"><path d="M.5 0V31M0 .5H93" stroke="#b4b1a9" fill="none"/></pattern>
            <linearGradient id="track" x2="0" y2="1"><stop stop-color="#f8f8f8"/><stop offset="1" stop-color="#c4c4c4"/></linearGradient>
            <radialGradient id="dial"><stop stop-color="#eee"/><stop offset="1" stop-color="#b4b4b4"/></radialGradient>
          </defs>
          <rect width="100%" height="100%" fill="url(#grid)"/>
          <g transform="translate(-1361 -192)">
            <rect class="group-box" x="1924" y="209" width="354" height="161"/><rect class="group-box" x="1675" y="449" width="178" height="346"/>
            ${single.map(w => svg`<path class="thin" d=${curve(w)}/>`)}
            ${double.map(w => svg`<path class="thick" d=${curve(w)}/><path class="core" d=${curve(w)}/>`)}
            ${tree.map(w => svg`<path class="tree" d=${curve(w)}/><path class="tree-core" d=${curve(w)}/>`)}
            ${nodes.map(drawNode)}
            ${chips.map(([t, x, y]) => svg`${port(x - 1, y + 6.5)}${port(x + 32, y + 6.5)}<rect class="body" x=${x} y=${y} width="31" height="13" rx="1.500"/><text class="port" x=${x + 15} y=${y + 9}>${t}</text>`)}
            ${notes.map(([t, x, y]) => svg`${port(x - 1, y + 7)}${port(x + 32, y + 7)}<rect x=${x} y=${y} width="31" height="14" rx="1" fill="#fffa5a" stroke="#222" stroke-width="1.200"/><text class="note" x=${x + 12} y=${y + 7}>${t}</text>`)}
            ${sliders.map(s => svg`${port(s.x + s.w + 1, s.y + 6)}
              <rect class="body" x=${s.x} y=${s.y} width=${s.w} height="12" rx="1"/><rect x=${s.x + s.cap} y=${s.y + 0.7} width=${s.w - s.cap - 0.7} height="10.600" fill="url(#track)"/>
              <path d="M${s.x + s.cap} ${s.y}V${s.y + 12}" stroke="#222"/><path d="M${s.x + s.cap + 5} ${s.y + 6}H${s.x + s.w - 6}" stroke="#aaa" stroke-width=".6"/>
              ${[0, 1, 2, 3, 4, 5, 6].map(k => svg`<path d="M${s.x + s.cap + 6 + (k * (s.w - s.cap - 13)) / 6} ${s.y + 3}v3" stroke="#999" stroke-width=".6"/>`)}
              <text class="port" x=${s.x + s.cap / 2} y=${s.y + 8}>${s.label}</text>
              <text class="port" x=${s.x + s.tx} y=${s.y + 8}>${s.value}</text>
              <foreignObject x=${s.x + s.cap} y=${s.y} width=${s.w - s.cap} height="12"><input class="slide" type="range" aria-label=${s.label} min="0" max="100" .value=${String(s.pos)}></foreignObject>`)}
            <circle cx="2878" cy="772" r="19.500" fill="url(#dial)" stroke="#fff" stroke-width="2"/><circle cx="2878" cy="772" r="20.800" fill="none" stroke="#444"/>
            <path d="M2858 768A20 20 0 0 1 2896 762" fill="none" stroke="#000" stroke-width="4"/><path d="M2849 761L2856 759L2858 766L2854 765Z"/>
            <path d="M2861 766L2866 767L2861 761ZM2881 756L2887 755L2882 761ZM2893 777L2897 776L2895 782ZM2873 786L2868 790L2875 791Z" fill="#fff"/>
          </g>
        </svg>
      </main>
      <footer class="status">${ic(svg`${ball(12, 12, 11, '#1f8fd0', '#035')}<path d="M12 5V13M12 16V19" stroke="#fff" stroke-width="3.500"/>`, 16)}<span>Solution completed in ~2.0 seconds (140 seconds ago)</span><span>1.0.0007</span></footer>
      <task-bar></task-bar>`;
  }
}

@customElement('app-root')
class AppRoot extends LitElement {
  static styles = css`
    :host { display: grid; grid-template-columns: minmax(0, 17fr) minmax(0, 20fr); min-height: 100vh; background: #000; }
    rhino-window { align-self: start; }
  `;
  render() {
    return html`<rhino-window></rhino-window><grasshopper-window></grasshopper-window>`;
  }
}
